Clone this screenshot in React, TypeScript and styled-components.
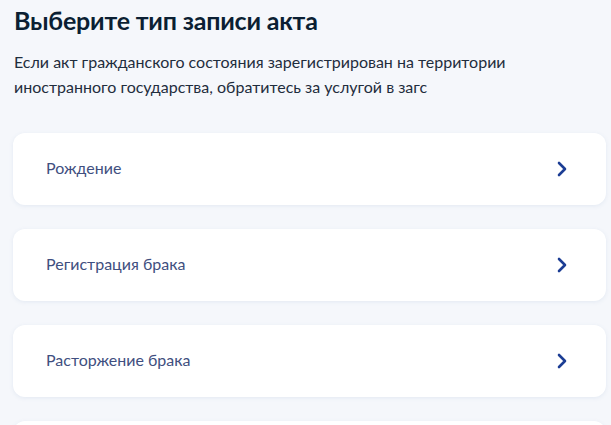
import React from 'react';
import styled, { createGlobalStyle } from 'styled-components';

const GlobalStyle = createGlobalStyle`
  html, body {
    margin: 0;
    padding: 0;
    background: #f5f7fb;
  }
  body {
    font-family: Lato, "Noto Sans", sans-serif;
    -webkit-font-smoothing: antialiased;
  }
`;

const items = ['Рождение', 'Регистрация брака', 'Расторжение брака', 'Установление отцовства'];

const App: React.FC = () => (
  <>
    <GlobalStyle />
    <Page>
      <Title>Выберите тип записи акта</Title>
      <Lead>
        Если акт гражданского состояния зарегистрирован на территории
        <br />
        иностранного государства, обратитесь за услугой в загс
      </Lead>
      <List>
        {items.map((label) => (
          <Card key={label}>
            <CardLabel>{label}</CardLabel>
            <Chevron viewBox="0 0 12 16" aria-hidden>
              <path d="M3 2 L9 8 L3 14" />
            </Chevron>
          </Card>
        ))}
      </List>
    </Page>
  </>
);

const Page = styled.div`
  padding: 4px 5px 0 13px;
  height: 425px;
  overflow: hidden;
  box-sizing: border-box;
`;

const Title = styled.h1`
  margin: 0 0 0 1px;
  font-size: 25px;
  line-height: 32px;
  font-weight: 700;
  letter-spacing: -0.2px;
  color: #0b1f33;
`;

const Lead = styled.p`
  margin: 13px 0 0 1px;
  font-size: 16px;
  line-height: 25px;
  color: #1f2d3d;
`;

const List = styled.div`
  display: flex;
  flex-direction: column;
  gap: 24px;
  margin-top: 34px;
`;

const Card = styled.div`
  display: flex;
  align-items: center;
  justify-content: space-between;
  height: 72px;
  padding: 0 38px 0 33px;
  background: #ffffff;
  border-radius: 12px;
  box-shadow: 0 1px 4px rgba(100, 130, 180, 0.12);
  flex-shrink: 0;
`;

const CardLabel = styled.span`
  font-size: 16px;
  line-height: 20px;
  padding-bottom: 2px;
  color: #3f4f80;
`;

const Chevron = styled.svg`
  width: 12px;
  height: 16px;
  fill: none;
  stroke: #1c3d94;
  stroke-width: 2.6;
  stroke-linecap: round;
  stroke-linejoin: round;
`;

export default App;
